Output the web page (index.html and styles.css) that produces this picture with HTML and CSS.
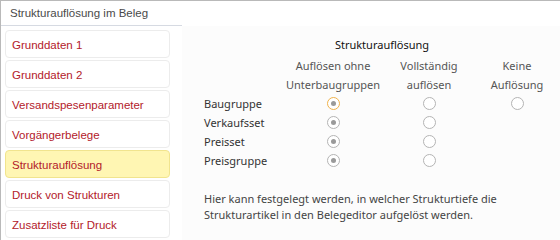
FILE: index.html
```html
<!DOCTYPE html>
<html lang="de">
<head>
    <meta charset="UTF-8">
    <title>Strukturauflösung im Beleg</title>
    <link rel="stylesheet" href="styles.css">
</head>
<body>
    <div class="window">
        <div class="sidebar">
            <div class="tab-title">Strukturauflösung im Beleg</div>
            <ul class="nav">
                <li>Grunddaten 1</li>
                <li>Grunddaten 2</li>
                <li>Versandspesenparameter</li>
                <li>Vorgängerbelege</li>
                <li class="active">Strukturauflösung</li>
                <li>Druck von Strukturen</li>
                <li>Zusatzliste für Druck</li>
            </ul>
        </div>

        <div class="content">
            <div class="options">
                <div class="options-title">Strukturauflösung</div>

                <div class="col-head"></div>
                <div class="col-head">Auflösen ohne<br>Unterbaugruppen</div>
                <div class="col-head">Vollständig<br>auflösen</div>
                <div class="col-head">Keine<br>Auflösung</div>

                <div class="row-label">Baugruppe</div>
                <div class="cell"><span class="radio checked focus"></span></div>
                <div class="cell"><span class="radio"></span></div>
                <div class="cell"><span class="radio"></span></div>

                <div class="row-label">Verkaufsset</div>
                <div class="cell"><span class="radio checked"></span></div>
                <div class="cell"><span class="radio"></span></div>
                <div class="cell"></div>

                <div class="row-label">Preisset</div>
                <div class="cell"><span class="radio checked"></span></div>
                <div class="cell"><span class="radio"></span></div>
                <div class="cell"></div>

                <div class="row-label">Preisgruppe</div>
                <div class="cell"><span class="radio checked"></span></div>
                <div class="cell"><span class="radio"></span></div>
                <div class="cell"></div>
            </div>

            <p class="hint">Hier kann festgelegt werden, in welcher Strukturtiefe die<br>Strukturartikel in den Belegeditor aufgelöst werden.</p>
        </div>
    </div>
</body>
</html>
```

FILE: styles.css
```css
body {
    margin: 0;
    font-family: "Noto Sans", "Open Sans", sans-serif;
    font-size: 11px;
    background-color: #ffffff;
}

.window {
    display: grid;
    grid-template-columns: 181px 1fr;
    height: 239px;
    border-top: 1px solid #b9b9b9;
    border-left: 1px solid #b9b9b9;
    overflow: hidden;
}

/* Left side navigation */
.sidebar {
    background-color: #ffffff;
    font-family: "Liberation Sans", Arial, sans-serif;
    font-size: 11.5px;
}

.tab-title {
    height: 24px;
    line-height: 24px;
    padding-left: 9px;
    color: #4a4a4a;
    border-bottom: 1px solid #d6dae2;
}

.nav {
    list-style: none;
    margin: 0;
    padding: 4px 0 0 4px;
}

.nav li {
    width: 157px;
    height: 26px;
    line-height: 28px;
    margin-bottom: 2px;
    padding-left: 6px;
    color: #b3202a;
    background-color: #ffffff;
    border: 1px solid #ececec;
    border-radius: 4px;
}

.nav li.active {
    background-color: #fff6b3;
    border-color: #f1e48e;
}

/* Right content panel */
.content {
    margin-top: 25px;
    background-color: #fcfcfc;
    padding: 11px 0 0 22px;
}

.options {
    display: grid;
    grid-template-columns: 78px 102px 90px 86px;
    grid-auto-rows: 19px;
    color: #333;
}

.options-title {
    grid-column: 1 / -1;
    text-align: center;
    color: #111;
    margin-bottom: 3px;
}

.col-head {
    grid-row: span 2;
    text-align: center;
    color: #555;
    line-height: 19px;
}

.row-label {
    line-height: 19px;
}

.cell {
    display: flex;
    justify-content: center;
    align-items: center;
}

.radio {
    position: relative;
    width: 11px;
    height: 11px;
    border: 1px solid #b4b4b4;
    border-radius: 50%;
    background-color: #ffffff;
}

.radio.checked::after {
    content: "";
    position: absolute;
    left: 3px;
    top: 3px;
    width: 5px;
    height: 5px;
    border-radius: 50%;
    background-color: #9a9a9a;
}

.radio.focus {
    border-color: #f0b24a;
}

.hint {
    margin: 21px 0 0 0;
    line-height: 16px;
    color: #444;
}
```
